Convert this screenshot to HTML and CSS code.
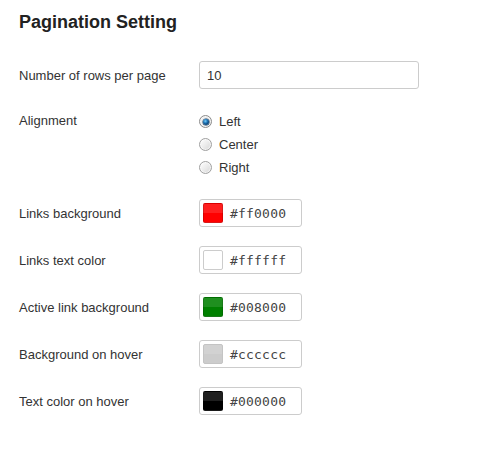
FILE: index.html
```html
<!DOCTYPE html>
<html>
<head>
<meta charset="utf-8">
<link rel="stylesheet" href="styles.css">
</head>
<body>
<div class="page">
  <h2 class="title">Pagination Setting</h2>
  <div class="form">
    <label class="label">Number of rows per page</label>
    <div class="field"><input class="text-input" type="text" value="10"></div>

    <label class="label label-top">Alignment</label>
    <div class="radios">
      <label class="radio-row"><span class="radio radio-checked"><span class="radio-dot"></span></span><span>Left</span></label>
      <label class="radio-row"><span class="radio"></span><span>Center</span></label>
      <label class="radio-row"><span class="radio"></span><span>Right</span></label>
    </div>

    <label class="label">Links background</label>
    <div class="field"><div class="color-input"><span class="swatch sw-red"></span><span class="hex">#ff0000</span></div></div>

    <label class="label">Links text color</label>
    <div class="field"><div class="color-input"><span class="swatch sw-white"></span><span class="hex">#ffffff</span></div></div>

    <label class="label">Active link background</label>
    <div class="field"><div class="color-input"><span class="swatch sw-green"></span><span class="hex">#008000</span></div></div>

    <label class="label">Background on hover</label>
    <div class="field"><div class="color-input"><span class="swatch sw-grey"></span><span class="hex">#cccccc</span></div></div>

    <label class="label">Text color on hover</label>
    <div class="field"><div class="color-input"><span class="swatch sw-black"></span><span class="hex">#000000</span></div></div>
  </div>
</div>
</body>
</html>
```

FILE: styles.css
```css
html, body {
  margin: 0;
  padding: 0;
  background: #fff;
}
body {
  font-family: "Liberation Sans", Arial, sans-serif;
  font-size: 13px;
  color: #333;
}
.page {
  padding: 11px 19px 0 19px;
}
.title {
  margin: 0 0 28px 0;
  font-size: 18px;
  line-height: 22px;
  font-weight: bold;
  color: #222;
}
.form {
  display: grid;
  grid-template-columns: 180px 1fr;
  row-gap: 19px;
  align-items: center;
}
.label {
  line-height: 16px;
  padding-top: 2px;
  color: #333;
}
.label-top {
  align-self: start;
  padding-top: 5px;
}
.text-input {
  box-sizing: border-box;
  width: 220px;
  height: 28px;
  border: 1px solid #ccc;
  border-radius: 3px;
  padding: 0 7px;
  font-family: "Liberation Sans", Arial, sans-serif;
  font-size: 13px;
  color: #333;
  outline: none;
  display: block;
}
.radios {
  display: flex;
  flex-direction: column;
  padding: 2px 0 1px 0;
}
.radio-row {
  display: flex;
  align-items: center;
  height: 23px;
  gap: 7px;
}
.radio {
  display: flex;
  align-items: center;
  justify-content: center;
  width: 13px;
  height: 13px;
  border-radius: 50%;
  border: 1px solid #a0a0a0;
  background: linear-gradient(135deg, #ffffff 0%, #eeeeee 45%, #d6d6d6 100%);
  box-sizing: border-box;
  box-shadow: inset 0 0 0 1px rgba(255,255,255,0.6);
}
.radio-checked {
  border-color: #8c8c8c;
  background: linear-gradient(135deg, #f4f4f4 0%, #dcdcdc 100%);
}
.radio-dot {
  width: 6px;
  height: 6px;
  border-radius: 50%;
  background: radial-gradient(circle at 40% 35%, #7fd0f5 0, #2a86c8 1.6px, #0f4f86 3px);
  box-shadow: 0 0 0 0.5px #1b3f60;
}
.color-input {
  box-sizing: border-box;
  width: 103px;
  height: 28px;
  border: 1px solid #ccc;
  border-radius: 3px;
  display: flex;
  align-items: center;
  padding: 0 3px;
  gap: 7px;
}
.swatch {
  box-sizing: border-box;
  width: 20px;
  height: 20px;
  border-radius: 2px;
  border: 1px solid rgba(0, 0, 0, 0.15);
  background-image: linear-gradient(rgba(255,255,255,0.12) 50%, rgba(255,255,255,0) 50%);
}
.sw-red { background-color: #ff0000; }
.sw-white { background-color: #ffffff; border-color: #ccc; }
.sw-green { background-color: #008000; }
.sw-grey { background-color: #cccccc; border-color: #c4c4c4; }
.sw-black { background-color: #000000; }
.hex {
  font-family: "DejaVu Sans Mono", monospace;
  font-size: 13px;
  color: #444;
  letter-spacing: 0.2px;
}
```
